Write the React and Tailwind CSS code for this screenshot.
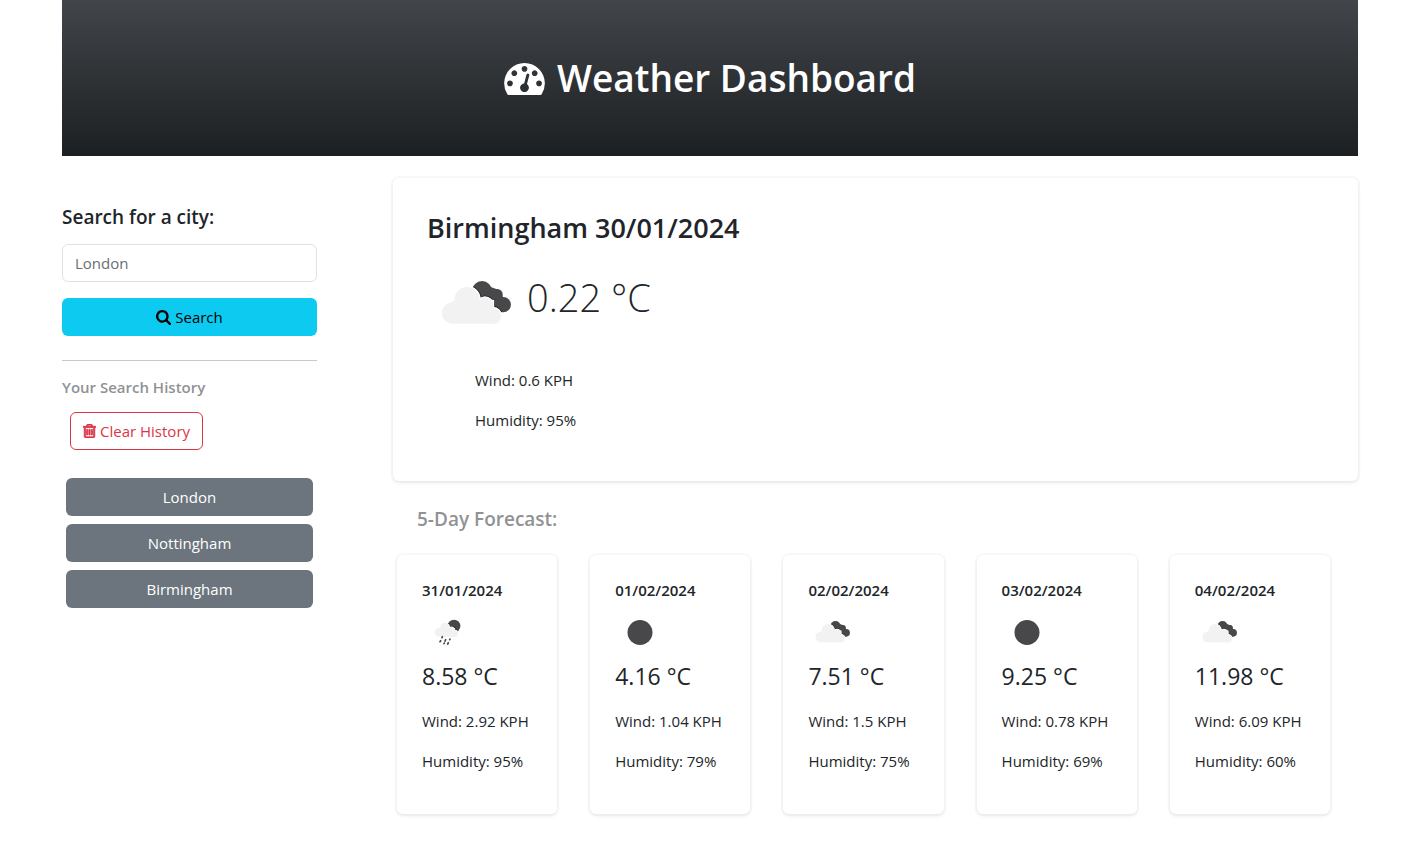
import React, { useId } from "react";

const HISTORY = ["London", "Nottingham", "Birmingham"];

const FORECAST = [
  { date: "31/01/2024", icon: "rain", temp: "8.58", wind: "2.92", humidity: 95 },
  { date: "01/02/2024", icon: "clear", temp: "4.16", wind: "1.04", humidity: 79 },
  { date: "02/02/2024", icon: "clouds", temp: "7.51", wind: "1.5", humidity: 75 },
  { date: "03/02/2024", icon: "clear", temp: "9.25", wind: "0.78", humidity: 69 },
  { date: "04/02/2024", icon: "clouds", temp: "11.98", wind: "6.09", humidity: 60 },
];

const ICON_PATHS = {
  dashboard:
    "M384 1152q0-53-37.5-90.5t-90.5-37.5-90.5 37.5-37.5 90.5 37.5 90.5 90.5 37.5 90.5-37.5 37.5-90.5zm192-448q0-53-37.5-90.5t-90.5-37.5-90.5 37.5-37.5 90.5 37.5 90.5 90.5 37.5 90.5-37.5 37.5-90.5zm428 481l101-382q6-26-7.5-48.5t-38.5-29.5-48 6.5-30 39.5l-101 382q-60 5-107 43.5t-63 98.5q-20 77 20 146t117 89 146-20 89-117q16-60-6-117t-72-91zm660-33q0-53-37.5-90.5t-90.5-37.5-90.5 37.5-37.5 90.5 37.5 90.5 90.5 37.5 90.5-37.5 37.5-90.5zm-640-640q0-53-37.5-90.5t-90.5-37.5-90.5 37.5-37.5 90.5 37.5 90.5 90.5 37.5 90.5-37.5 37.5-90.5zm448 192q0-53-37.5-90.5t-90.5-37.5-90.5 37.5-37.5 90.5 37.5 90.5 90.5 37.5 90.5-37.5 37.5-90.5zm320 448q0 261-141 483-19 29-54 29h-1402q-35 0-54-29-141-221-141-483 0-182 71-348t191-286 286-191 348-71 348 71 286 191 191 286 71 348z",
  search:
    "M1216 832q0-185-131.5-316.5t-316.5-131.5-316.5 131.5-131.5 316.5 131.5 316.5 316.5 131.5 316.5-131.5 131.5-316.5zm512 832q0 52-38 90t-90 38q-54 0-90-38l-343-342q-179 124-399 124-143 0-273.5-55.5t-225-150-150-225-55.5-273.5 55.5-273.5 150-225 225-150 273.5-55.5 273.5 55.5 225 150 150 225 55.5 273.5q0 220-124 399l343 343q37 37 37 90z",
  trash:
    "M704 736v576q0 14-9 23t-23 9h-64q-14 0-23-9t-9-23v-576q0-14 9-23t23-9h64q14 0 23 9t9 23zm256 0v576q0 14-9 23t-23 9h-64q-14 0-23-9t-9-23v-576q0-14 9-23t23-9h64q14 0 23 9t9 23zm256 0v576q0 14-9 23t-23 9h-64q-14 0-23-9t-9-23v-576q0-14 9-23t23-9h64q14 0 23 9t9 23zm128 724v-948h-896v948q0 22 7 40.5t14.5 27 10.5 8.5h832q3 0 10.5-8.5t14.5-27 7-40.5zm-672-1076h448l-48-117q-7-9-17-11h-317q-10 2-17 11zm928 32v64q0 14-9 23t-23 9h-96v948q0 83-47 143.5t-113 60.5h-832q-66 0-113-58.5t-47-141.5v-952h-96q-14 0-23-9t-9-23v-64q0-14 9-23t23-9h309l70-167q15-37 54-63t79-26h320q40 0 79 26t54 63l70 167h309q14 0 23 9t9 23z",
};

function Icon({ name, viewBox = "0 0 1792 1792", strokeWidth = 0, className }) {
  return (
    <svg
      viewBox={viewBox}
      fill="currentColor"
      stroke="currentColor"
      strokeWidth={strokeWidth}
      aria-hidden="true"
      className={className}
    >
      <path d={ICON_PATHS[name]} />
    </svg>
  );
}

function BigCloud(props) {
  return (
    <g {...props}>
      <circle cx="10.5" cy="32" r="10.7" />
      <circle cx="25" cy="18.5" r="12.5" />
      <circle cx="43" cy="24" r="7.5" />
      <circle cx="51" cy="35" r="8" />
      <rect x="10" y="20" width="41" height="22.7" />
    </g>
  );
}

function DarkCloud() {
  return (
    <>
      <circle cx="40" cy="10" r="10" />
      <circle cx="55" cy="13.7" r="5.8" />
      <circle cx="61.3" cy="23.7" r="7.6" />
      <path d="M34 6L46 5L57 9L62 18L61 31L50 29L34 20Z" />
    </>
  );
}

function SmallCloud(props) {
  return (
    <g {...props}>
      <circle cx="58" cy="67" r="14" />
      <circle cx="75" cy="53" r="14" />
      <circle cx="94" cy="60" r="9" />
      <circle cx="104" cy="71" r="10" />
      <rect x="58" y="56" width="46" height="25" />
    </g>
  );
}

function WeatherIcon({ kind, className }) {
  const clip = useId();
  return (
    <svg viewBox="0 0 100 100" role="img" aria-label={kind} className={className}>
      {kind === "clear" && <circle cx="50" cy="49" r="25" fill="#48484a" />}
      {kind === "clouds" && (
        <g transform="translate(15 26)">
          <clipPath id={clip}>
            <DarkCloud />
          </clipPath>
          <g fill="#48484a">
            <DarkCloud />
          </g>
          <g clipPath={`url(#${clip})`}>
            <BigCloud fill="#1c1c1e" stroke="#1c1c1e" strokeWidth="4" />
          </g>
          <BigCloud fill="#fff" stroke="#fff" strokeWidth="2.5" />
          <BigCloud fill="#f2f2f2" />
        </g>
      )}
      {kind === "rain" && (
        <g transform="translate(-4 4) scale(0.667)">
          <clipPath id={clip}>
            <circle cx="102" cy="48" r="19" />
          </clipPath>
          <circle cx="102" cy="48" r="19" fill="#48484a" />
          <g clipPath={`url(#${clip})`}>
            <SmallCloud fill="#1c1c1e" stroke="#1c1c1e" strokeWidth="6" />
          </g>
          <SmallCloud fill="#fff" stroke="#fff" strokeWidth="3" />
          <SmallCloud fill="#f2f2f2" />
          <path
            d="M67 80l-1 3M62 92l-2 3M77 89l-2 4M73 99l-1 2M90 87l-1 2M85 98l-2 4"
            stroke="#48484a"
            strokeWidth="5"
            strokeLinecap="round"
          />
        </g>
      )}
    </svg>
  );
}

function ForecastCard({ date, icon, temp, wind, humidity }) {
  return (
    <article className="rounded-md bg-white pt-[25px] pb-[41px] pl-[25px] shadow-[0_0_0_2px_rgba(0,0,0,0.025),0_2px_4px_rgba(0,0,0,0.07)]">
      <h3 className="text-[15px] leading-5 font-semibold">{date}</h3>
      <WeatherIcon kind={icon} className="mt-2 size-[50px]" />
      <p className="mt-1 text-[23px] leading-7">{temp} °C</p>
      <p className="mt-[19px] text-[15px] leading-6 whitespace-nowrap">Wind: {wind} KPH</p>
      <p className="mt-4 text-[15px] leading-6 whitespace-nowrap">Humidity: {humidity}%</p>
    </article>
  );
}

export default function App() {
  return (
    <div className="pr-[58px] pb-10 pl-[62px] font-['Open_Sans','Noto_Sans',sans-serif] text-[#212529]">
      <header className="flex items-center justify-center gap-3 bg-linear-to-b from-[#42464a] to-[#1c2023] py-[54px] text-white">
        <Icon name="dashboard" viewBox="0 256 1792 1408" className="mt-[2px] h-8 w-[41px]" />
        <h1 className="text-[37px] leading-12 font-semibold">Weather Dashboard</h1>
      </header>

      <div className="mt-[22px] grid grid-cols-[255fr_965fr] gap-x-[76px]">
        <aside className="pt-[27px]">
          <form onSubmit={(e) => e.preventDefault()}>
            <label htmlFor="city" className="block text-[19px] leading-6 font-semibold">
              Search for a city:
            </label>
            <input
              id="city"
              type="text"
              placeholder="London"
              className="mt-[15px] block h-[38px] w-full rounded-md border border-[#dee2e6] px-3 text-[15px] placeholder:text-[#6a6e72]"
            />
            <button
              type="submit"
              className="mt-4 flex h-[38px] w-full items-center justify-center gap-1 rounded-md bg-[#0dcaf0] text-[15px] text-black"
            >
              <Icon name="search" viewBox="64 128 1664 1664" className="size-[15px]" />
              Search
            </button>
          </form>
          <hr className="mt-6 border-[#c8c9ca]" />
          <h2 className="mt-4 text-[15px] leading-5 font-semibold text-[#909294]">
            Your Search History
          </h2>
          <button
            type="button"
            className="mt-[15px] ml-2 flex h-[38px] items-center gap-1 rounded-md border border-[#dc3545] px-3 text-[15px] text-[#dc3545]"
          >
            <Icon
              name="trash"
              viewBox="192 128 1408 1536"
              strokeWidth={90}
              className="h-[14px] w-[13px]"
            />
            Clear History
          </button>
          <ul className="mt-7 flex flex-col gap-2 px-1">
            {HISTORY.map((city) => (
              <li key={city}>
                <button
                  type="button"
                  className="h-[38px] w-full rounded-md bg-[#6c757d] text-[15px] text-white"
                >
                  {city}
                </button>
              </li>
            ))}
          </ul>
        </aside>

        <main>
          <section className="rounded-md bg-white px-[34px] pt-[33px] pb-[49px] shadow-[0_0_0_2px_rgba(0,0,0,0.025),0_2px_4px_rgba(0,0,0,0.07)]">
            <h2 className="text-[27px] leading-[34px] font-semibold">Birmingham 30/01/2024</h2>
            <div className="mt-[10px] flex items-center">
              <WeatherIcon kind="clouds" className="size-[100px]" />
              <p className="pb-4 text-[38px] leading-12 font-light">0.22 °C</p>
            </div>
            <p className="mt-[13px] pl-12 text-[15px] leading-6">Wind: 0.6 KPH</p>
            <p className="mt-4 pl-12 text-[15px] leading-6">Humidity: 95%</p>
          </section>

          <section className="pr-[28px] pl-1">
            <h2 className="mt-[26px] pl-5 text-[19px] leading-6 font-semibold text-[#909294]">
              5-Day Forecast:
            </h2>
            <div className="mt-6 grid grid-cols-5 gap-x-[33px]">
              {FORECAST.map((day) => (
                <ForecastCard key={day.date} {...day} />
              ))}
            </div>
          </section>
        </main>
      </div>
    </div>
  );
}
